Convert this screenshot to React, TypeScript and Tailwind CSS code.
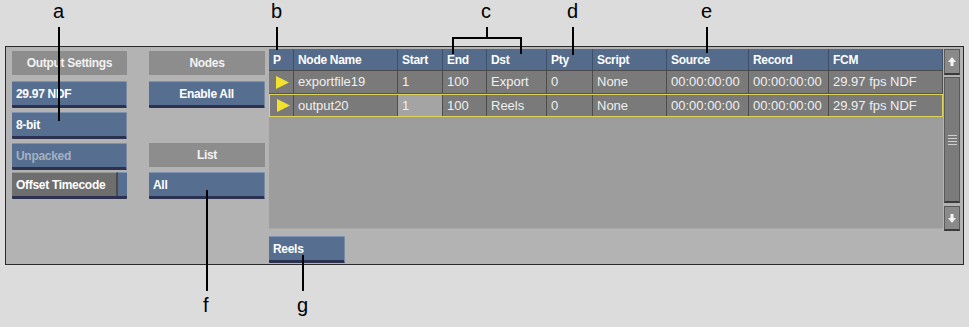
import React from "react";

const font = { fontFamily: '"Liberation Sans", Arial, sans-serif' };

const cols = [
  { name: "P", w: "w-[25px]" },
  { name: "Node Name", w: "w-[104px]" },
  { name: "Start", w: "w-[45px]" },
  { name: "End", w: "w-[44px]" },
  { name: "Dst", w: "w-[60px]" },
  { name: "Pty", w: "w-[46px]" },
  { name: "Script", w: "w-[74px]" },
  { name: "Source", w: "w-[82px]" },
  { name: "Record", w: "w-[80px]" },
  { name: "FCM", w: "w-[114px]" },
];

const rows = [
  ["", "exportfile19", "1", "100", "Export", "0", "None", "00:00:00:00", "00:00:00:00", "29.97 fps NDF"],
  ["", "output20", "1", "100", "Reels", "0", "None", "00:00:00:00", "00:00:00:00", "29.97 fps NDF"],
];

function Label({ children }: { children: React.ReactNode }) {
  return (
    <div className="flex h-[24px] items-center justify-center bg-[#8d8d8d] text-[12px] font-bold tracking-[-0.3px] text-[#f2f2f2]">
      {children}
    </div>
  );
}

function Btn({
  children,
  center,
  dim,
  className,
}: {
  children: React.ReactNode;
  center?: boolean;
  dim?: boolean;
  className?: string;
}) {
  return (
    <div
      className={
        "flex h-[27px] items-center rounded-[1px] border-t border-t-[#7d93b2] border-b-[3px] border-b-[#2c3150] border-r border-r-[#7a8aa3] bg-[#566f91] px-[4px] text-[12px] font-bold tracking-[-0.3px] " +
        (center ? "justify-center " : "") +
        (dim ? "text-[#a4b0c2] " : "text-white ") +
        (className ?? "")
      }
    >
      {children}
    </div>
  );
}

function Play() {
  return (
    <svg width="13" height="13" viewBox="0 0 13 13">
      <polygon points="0,0 13,6.5 0,13" fill="#f2e22e" />
    </svg>
  );
}

export default function App() {
  return (
    <div className="relative h-[327px] w-[969px] overflow-hidden bg-[#dcdcdc]" style={font}>
      <div className="pl-[5px] pt-[46px]">
        <div className="flex h-[219px] w-[959px] items-start border border-[#2a2a2a] bg-[#b3b3b3] pl-[6px] pt-[2px]">
          {/* left column */}
          <div className="mt-[2px] flex w-[115px] flex-col">
            <Label>Output Settings</Label>
            <Btn className="mt-[6px]">29.97 NDF</Btn>
            <Btn className="mt-[4px]">8-bit</Btn>
            <Btn className="mt-[4px]" dim>
              Unpacked
            </Btn>
            <div className="mt-[2px] flex h-[27px] rounded-[1px] border-b-[3px] border-b-[#2c3150]">
              <div className="flex w-[106px] items-center border-t border-t-[#9a9a9a] border-r-2 border-r-[#4a4a4a] bg-[#6e6e6e] px-[4px] text-[12px] font-bold tracking-[-0.3px] text-white">
                Offset Timecode
              </div>
              <div className="flex-1 border-t border-t-[#7d93b2] bg-[#566f91]" />
            </div>
          </div>

          {/* middle column */}
          <div className="ml-[22px] mt-[2px] flex w-[116px] flex-col">
            <Label>Nodes</Label>
            <Btn className="mt-[6px]" center>
              Enable All
            </Btn>
            <div className="mt-[35px]">
              <Label>List</Label>
            </div>
            <Btn className="mt-[5px]">All</Btn>
          </div>

          {/* table */}
          <div className="ml-[4px] flex flex-col">
            <div className="flex">
              <div className="flex h-[180px] w-[674px] flex-col bg-[#9d9d9d]">
                <div className="flex h-[22px] border-b border-[#4a4a4a] bg-[#546b8b]">
                  {cols.map((c) => (
                    <div
                      key={c.name}
                      className={c.w + " flex items-center border-r border-[#3e4f68] pl-[4px] text-[12px] font-bold tracking-[-0.3px] text-white"}
                    >
                      {c.name}
                    </div>
                  ))}
                </div>
                {rows.map((r, i) => (
                  <div
                    key={i}
                    className={
                      "flex h-[23px] " +
                      (i === 1 ? "border border-[#dcd45a] bg-[#7a7a7a]" : "border-b border-[#555555] bg-[#7a7a7a]")
                    }
                  >
                    {r.map((v, j) => (
                      <div
                        key={j}
                        className={
                          cols[j].w +
                          " flex items-center border-r border-[#4d4d4d] text-[13px] text-[#f0f0f0] " +
                          (j === 0 ? "pl-[7px] " : "pl-[4px] ") +
                          (i === 1 && j === 2 ? "bg-[#a4a4a4] " : "") +
                          (i === 1 && j === 0 ? "!w-[24px] " : "") +
                          (i === 1 && j === 9 ? "!w-[113px] border-r-0 " : "")
                        }
                      >
                        {j === 0 ? <Play /> : v}
                      </div>
                    ))}
                  </div>
                ))}
                <div className="flex-1" />
                <div className="h-[1px] bg-[#a9a9a9]" />
              </div>

              {/* scrollbar */}
              <div className="ml-[1px] flex w-[16px] flex-col">
                <div className="flex h-[26px] items-center justify-center border border-[#5a5a5a] border-b-[2px] border-b-[#3a3a3a] bg-[#8a8a8a]">
                  <svg width="8" height="9" viewBox="0 0 8 9">
                    <polygon points="4,0 8,5 5.5,5 5.5,9 2.5,9 2.5,5 0,5" fill="#f4f4f4" />
                  </svg>
                </div>
                <div className="mt-[2px] flex h-[126px] flex-col items-center justify-center border border-[#5a5a5a] border-b-[2px] border-b-[#3a3a3a] bg-[#7b7b7b]">
                  <div className="flex flex-col gap-[2px]">
                    <div className="h-[1px] w-[9px] bg-[#d0d0d0]" />
                    <div className="h-[1px] w-[9px] bg-[#d0d0d0]" />
                    <div className="h-[1px] w-[9px] bg-[#d0d0d0]" />
                    <div className="h-[1px] w-[9px] bg-[#d0d0d0]" />
                  </div>
                </div>
                <div className="mt-[3px] flex h-[25px] items-center justify-center border border-[#5a5a5a] border-b-[2px] border-b-[#3a3a3a] bg-[#8a8a8a]">
                  <svg width="8" height="9" viewBox="0 0 8 9">
                    <polygon points="4,9 8,4 5.5,4 5.5,0 2.5,0 2.5,4 0,4" fill="#f4f4f4" />
                  </svg>
                </div>
              </div>
            </div>
            <div className="mt-[5px] w-[76px]">
              <Btn>Reels</Btn>
            </div>
          </div>
        </div>
      </div>

      {/* callouts */}
      <div className="absolute left-[53px] top-[1px] text-[20px] leading-[20px] text-black">a</div>
      <div className="absolute left-[58px] top-[27px] h-[94px] w-[2px] bg-black" />

      <div className="absolute left-[271px] top-[1px] text-[20px] leading-[20px] text-black">b</div>
      <div className="absolute left-[276px] top-[27px] h-[23px] w-[2px] bg-black" />

      <div className="absolute left-[481px] top-[1px] text-[20px] leading-[20px] text-black">c</div>
      <div className="absolute left-[486px] top-[27px] h-[12px] w-[2px] bg-black" />
      <div className="absolute left-[452px] top-[37px] h-[2px] w-[70px] bg-black" />
      <div className="absolute left-[452px] top-[37px] h-[17px] w-[2px] bg-black" />
      <div className="absolute left-[520px] top-[37px] h-[17px] w-[2px] bg-black" />

      <div className="absolute left-[567px] top-[1px] text-[20px] leading-[20px] text-black">d</div>
      <div className="absolute left-[572px] top-[27px] h-[28px] w-[2px] bg-black" />

      <div className="absolute left-[701px] top-[1px] text-[20px] leading-[20px] text-black">e</div>
      <div className="absolute left-[706px] top-[27px] h-[26px] w-[2px] bg-black" />

      <div className="absolute left-[206px] top-[190px] h-[101px] w-[2px] bg-black" />
      <div className="absolute left-[203px] top-[295px] text-[20px] leading-[20px] text-black">f</div>

      <div className="absolute left-[302px] top-[255px] h-[36px] w-[2px] bg-black" />
      <div className="absolute left-[297px] top-[295px] text-[20px] leading-[20px] text-black">g</div>
    </div>
  );
}
